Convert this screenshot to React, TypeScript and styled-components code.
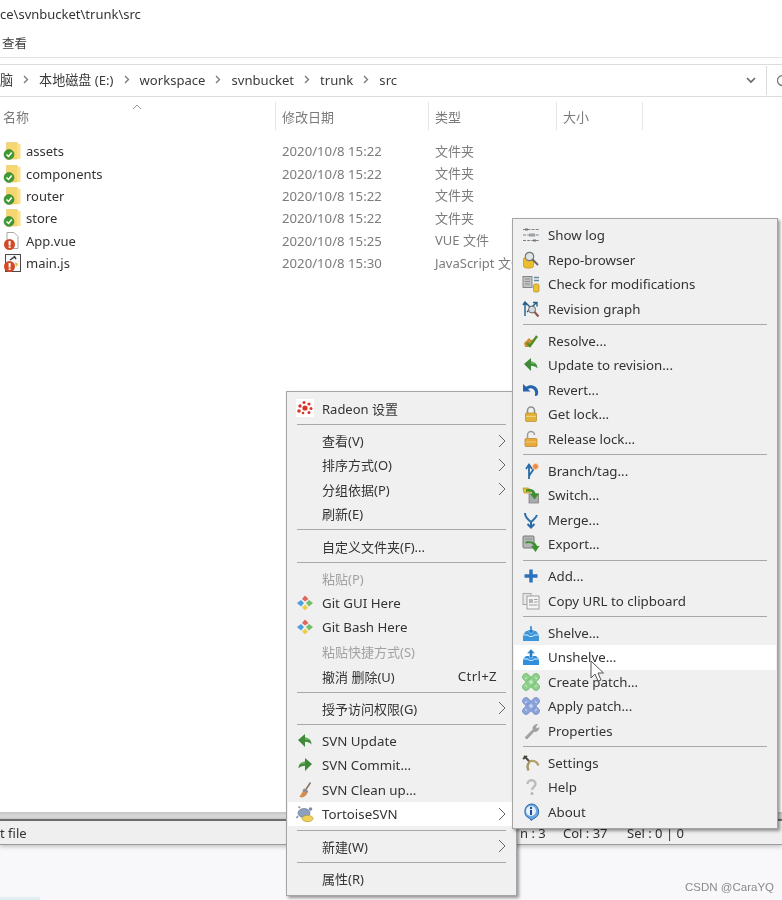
import React from "react";
import styled, { createGlobalStyle } from "styled-components";

const Global = createGlobalStyle`
  html, body { margin: 0; padding: 0; background: #fff; }
  body { font-family: "Noto Sans", "Noto Sans CJK SC", sans-serif; }
`;

const Page = styled.div`
  position: relative;
  width: 782px;
  height: 900px;
  overflow: hidden;
  display: flex;
  flex-direction: column;
  background: #fff;
  color: #333;
  font-size: 13px;
  filter: blur(0.4px);
`;
const TitleBar = styled.div`
  height: 28px;
  flex: none;
  display: flex;
  align-items: center;
  font-size: 13px;
  color: #333;
`;
const Toolbar = styled.div`
  height: 30px;
  flex: none;
  display: flex;
  align-items: center;
  padding-left: 2px;
  font-size: 12.5px;
  color: #444;
  border-bottom: 1px solid #e2e2e2;
  box-sizing: border-box;
`;
const AddressBar = styled.div`
  margin-top: 6px;
  height: 33px;
  flex: none;
  box-sizing: border-box;
  padding-bottom: 2px;
  border-top: 1px solid #dcdcdc;
  border-bottom: 1px solid #dcdcdc;
  display: flex;
  align-items: center;
  gap: 10px;
`;
const Crumb = styled.span`
  font-size: 13.1px;
  color: #3c3c3c;
  white-space: nowrap;
`;
const AddressEnd = styled.div`
  margin-left: auto;
  margin-bottom: -2px;
  height: 100%;
  width: 36px;
  flex: none;
  display: flex;
  align-items: center;
  gap: 10px;
  svg { flex: none; }
`;
const AddressDivider = styled.div`
  width: 1px;
  height: 100%;
  flex: none;
  background: #dcdcdc;
`;
const HeaderRow = styled.div`
  position: relative;
  margin-top: 4px;
  height: 29px;
  flex: none;
  display: grid;
  grid-template-columns: 276px 153px 128px 86px;
  align-items: stretch;
  font-size: 13px;
  color: #7a7a7a;
`;
const HeaderCell = styled.div<{ $first?: boolean }>`
  display: flex;
  align-items: center;
  padding-left: ${p => (p.$first ? 3 : 6)}px;
  padding-top: 1px;
  border-right: 1px solid #e6e6e6;
  margin-top: 1px;
  box-sizing: border-box;
`;
const SortCaret = styled.svg`
  position: absolute;
  left: 132px;
  top: 3px;
`;
const FileList = styled.div`
  flex: 1;
  padding-top: 10px;
  min-height: 0;
`;
const FileRow = styled.div`
  height: 22.4px;
  display: grid;
  grid-template-columns: 276px 153px auto;
  align-items: center;
`;
const NameCell = styled.div`
  display: flex;
  align-items: center;
  gap: 5px;
  padding-left: 3px;
  font-size: 13px;
  color: #333;
`;
const DateCell = styled.div`
  padding-left: 6px;
  font-size: 13.2px;
  color: #7c7c7c;
  white-space: nowrap;
`;
const TypeCell = styled(DateCell)`
  font-size: 13px;
  margin-bottom: 2px;
`;
const Splitter = styled.div`
  height: 9px;
  flex: none;
  box-sizing: border-box;
  background: linear-gradient(#c4c4c4, #dadada 60%, #c8c8c8);
  border-bottom: 2px solid #6f6f6f;
`;
const StatusBar = styled.div`
  height: 24px;
  flex: none;
  box-sizing: border-box;
  display: grid;
  grid-template-columns: 520px 43px 64px auto;
  align-items: center;
  background: #efefef;
  border-bottom: 1px solid #9a9a9a;
  box-shadow: 0 2px 4px rgba(0, 0, 0, 0.2);
  font-size: 13px;
  color: #333;
  white-space: nowrap;
  position: relative;
`;
const FooterArea = styled.div`
  height: 55px;
  flex: none;
  box-sizing: border-box;
  background: #f8f7f9;
  display: flex;
  align-items: flex-end;
  justify-content: flex-start;
  padding: 0 0 7px 685px;
`;
const Watermark = styled.span`
  font-family: "Liberation Sans", sans-serif;
  font-size: 11.5px;
  color: #8a8a8a;
  white-space: nowrap;
`;
const BottomTab = styled.div`
  position: absolute;
  left: 0;
  bottom: 0;
  width: 40px;
  height: 3px;
  background: #e2eef2;
`;
const Menu = styled.div<{ $left: number; $top: number; $w: number; $h: number; $row: number; $sep: number; $pad: number }>`
  position: absolute;
  left: ${p => p.$left}px;
  top: ${p => p.$top}px;
  width: ${p => p.$w}px;
  height: ${p => p.$h}px;
  box-sizing: border-box;
  padding: ${p => p.$pad}px 1px 0;
  background: #f0f0f0;
  border: 1px solid #a4a4a4;
  box-shadow: 2px 2px 3px rgba(0, 0, 0, 0.4);
  --row: ${p => p.$row}px;
  --sep: ${p => p.$sep}px;
  overflow: hidden;
`;
const Item = styled.div<{ $hot?: boolean; $off?: boolean }>`
  height: var(--row);
  display: flex;
  align-items: center;
  gap: 8px;
  padding: 0 9px 0 8px;
  white-space: nowrap;
  color: ${p => (p.$off ? "#a2a2a2" : "#333")};
  background: ${p => (p.$hot ? "#fff" : "transparent")};
`;
const Label = styled.span<{ $zh: boolean }>`
  font-size: ${p => (p.$zh ? 13 : 13.3)}px;
`;
const IconSlot = styled.span`
  width: 18px;
  height: 18px;
  flex: none;
  display: flex;
`;
const Shortcut = styled.span`
  margin-left: auto;
  margin-right: 9px;
  font-size: 13.3px;
  letter-spacing: 0.3px;
`;
const Chevron = styled.svg`
  margin-left: auto;
  flex: none;
`;
const Sep = styled.div`
  height: var(--sep);
  display: flex;
  align-items: center;
  padding: 0 9px;
  &::after {
    content: "";
    flex: 1;
    height: 1px;
    background: #a8a8a8;
  }
`;
const Cursor = styled.svg`
  position: absolute;
  left: 590px;
  top: 660px;
`;

const I = ({ children }: { children: React.ReactNode }) => (
  <svg width="18" height="18" viewBox="0 0 18 18">{children}</svg>
);

const Patch = ({ a, b, c }: { a: string; b: string; c: string }) => (
  <I>
    <g fill={a} stroke={b} strokeWidth=".5">
      <rect x="-1.500" y="5.500" width="21" height="7" rx="3" transform="rotate(45 9 9)" />
      <rect x="-1.500" y="5.500" width="21" height="7" rx="3" transform="rotate(-45 9 9)" />
    </g>
    <path d="M6.500 9L9 6.500 11.500 9 9 11.500z" fill={c} />
    <path d="M3 6l2-2M13 4l2 2M3 12l2 2M13 14l2-2" stroke={c} strokeWidth="1.200" />
  </I>
);

const icons: Record<string, React.ReactNode> = {
  log: <I><g stroke="#7d8288" strokeWidth="1.100"><path d="M1 3.500h16M1 9h16M1 14.500h16" strokeDasharray="3 1.200" /></g><path d="M7 7.500h6v3H7z" fill="#9aa0a6" /><path d="M3 2.500h3v2H3zM11 13.500h3v2h-3z" fill="#777" /></I>,
  repo: <I><path d="M1.500 7.500c0-1.300 10-1.300 10 0v8c0 2.200-10 2.200-10 0z" fill="#e9bd2c" stroke="#b98a14" strokeWidth=".6" /><circle cx="7.500" cy="5.500" r="4.200" fill="#dfe4e6" stroke="#75797c" strokeWidth="1.200" /><path d="M10.500 8.500l5.500 5.500" stroke="#6e6258" strokeWidth="2" /></I>,
  check: <I><rect x="1" y="1.500" width="9" height="11" fill="#c0c2c4" stroke="#85888b" /><path d="M3 4h5M3 6.500h5M3 9h5" stroke="#8d9094" /><path d="M12 2.500h5M12 5.500h5" stroke="#5e8c9e" strokeWidth="1.400" /><rect x="11.500" y="9" width="5.500" height="8" rx="1.500" fill="#ecc136" stroke="#b38a14" strokeWidth=".7" /></I>,
  graph: <I><path d="M3 16V3M1 5l2-3 2 3M5 12L14 3M11 2.500h4v4M4 3l8 8" stroke="#1f5f8e" strokeWidth="1.400" fill="none" /><circle cx="10" cy="9.500" r="3.500" fill="#d4dbe0" stroke="#666" /><path d="M12.500 12l4 4.500" stroke="#8a5a48" strokeWidth="2.200" /></I>,
  resolve: <I><path d="M2 11l5-5 2 2 3-1-1 4-3 4H3z" fill="#c99136" /><path d="M5 11l3 3 7-10" stroke="#4f8c2a" strokeWidth="2.400" fill="none" /></I>,
  update: <I><path d="M2 8l7-6v3.500c4 .5 6.500 3 6.500 7-1.500-2-3.500-2.800-6.500-2.800V15z" fill="#3f8a38" /><path d="M9 2v3.500c3 .4 5 1.500 6 3.500-2-1-4-1.200-6-1.200z" fill="#6fb060" /></I>,
  commit: <I><path d="M16 8L9 2v3.500c-4 .5-6.500 3-6.500 7 1.500-2 3.500-2.800 6.500-2.800V15z" fill="#3f8a38" /><path d="M9 2v3.500c-3 .4-5 1.500-6 3.500 2-1 4-1.200 6-1.200z" fill="#6fb060" /></I>,
  revert: <I><path d="M1 3v7.500h7.500L6 8c3-1.500 6-.5 7 3 .3 1.200.2 2.700-.3 4l2.800-.5c1.300-3 .8-6.500-1.700-8.500C10.500 3.500 7 3.700 4 5.700z" fill="#2663ac" /></I>,
  lock: <I><path d="M5.500 8V5.500a3.500 3.500 0 017 0V8" stroke="#8f8f8f" strokeWidth="1.600" fill="none" /><rect x="3.500" y="8" width="11" height="8.500" rx="1" fill="#e3b23a" stroke="#a97f15" strokeWidth=".6" /><path d="M4 11.500h10" stroke="#f0d27b" /></I>,
  unlock: <I><path d="M5.500 8V5a3.500 3.500 0 017 0" stroke="#9b9b9b" strokeWidth="1.500" fill="none" /><rect x="3" y="8.500" width="12" height="8" rx="1" fill="#e8a83a" stroke="#b5741a" strokeWidth=".6" /><path d="M3.500 12h11" stroke="#f3cd7c" /></I>,
  branch: <I><path d="M7 17V4M4 7l3-4.500L10 7M7 14L13 5" stroke="#2a6aa8" strokeWidth="1.800" fill="none" /><circle cx="13.500" cy="4.500" r="3" fill="#ef8a45" stroke="#fcd9b5" /></I>,
  switch: <I><rect x="7" y="8" width="9.500" height="9" fill="#a9acae" stroke="#777" strokeWidth=".7" /><path d="M1 2h5.500L8 3.500V7H2z" fill="#e8c338" stroke="#a98a14" strokeWidth=".7" /><path d="M4 3.500c5.500-1.500 9 .5 9.500 4H17l-4.500 6-4.500-6h2.500C10 6 7.500 5 4 6z" fill="#3f8f2f" /></I>,
  merge: <I><path d="M9 10V16M5.500 13L9 16.500l3.500-3.500" stroke="#2a6aa8" strokeWidth="2" fill="none" /><path d="M3 2c0 5 3 6 6 9 3-3 5-4 6-7" stroke="#2f6fa8" strokeWidth="2" fill="none" /></I>,
  export: <I><rect x="1" y="1" width="11" height="12" rx="1" fill="#b5b7b8" stroke="#77797b" /><path d="M3 4h7" stroke="#8b8d90" /><path d="M3.500 8.500c5-1.500 7 0 8 2.500H9l4.500 6 4-6H15C14 7 9 5.500 3.500 6.500z" fill="#3c9330" /></I>,
  add: <I><path d="M9 2.500v13M2.500 9h13" stroke="#2a70bd" strokeWidth="3.400" /></I>,
  copy: <I><rect x="1" y="1.500" width="8" height="11" fill="#e8e8e8" stroke="#a8a8a8" /><rect x="5" y="4" width="12" height="13" fill="#f5f5f5" stroke="#a0a0a0" /><path d="M7 7h4v4H7z" fill="#b5b5b5" /><path d="M12 7.500h3.500M12 10h3.500M7 13h8.500" stroke="#a0a0a0" /></I>,
  shelve: <I><path d="M1 11l3-4h10l3 4v6H1z" fill="#3d96dc" /><path d="M1 11h5c0 2 6 2 6 0h5" stroke="#d7edfb" fill="none" /><path d="M9 10L5.500 6H8V2h2v4h2.500z" fill="#2a7cc4" stroke="#d7edfb" strokeWidth=".5" /></I>,
  unshelve: <I><path d="M1 11l3-3h10l3 3v6H1z" fill="#2f8ede" /><path d="M1 11h5c0 2 6 2 6 0h5" stroke="#d7edfb" fill="none" /><path d="M9 1l4 4.500h-2.500V10h-3V5.500H5z" fill="#2a7cc4" stroke="#d7edfb" strokeWidth=".5" /></I>,
  patchG: <Patch a="#8ccf8a" b="#63ad63" c="#bfe8b8" />,
  patchB: <Patch a="#8aa2da" b="#6a84c2" c="#c0cfee" />,
  wrench: <I><path d="M3 15.500l8-8c-.5-2.500 1-5 4.500-5l-2 2.500 1.500 2 2-1.500c0 3-2.500 4.500-5 4l-7 7.500z" fill="#a3a3a3" stroke="#858585" strokeWidth=".5" /></I>,
  settings: <I><path d="M2 2l6 6M1 5l4-3" stroke="#4a463f" strokeWidth="2" /><path d="M7 7.500c4-1.500 8 0 9.500 4" stroke="#b3a06a" strokeWidth="2.400" fill="none" /><path d="M7.500 8c-2 2-2.500 5-1 8.500" stroke="#a8965f" strokeWidth="2.400" fill="none" /></I>,
  help: <I><path d="M5.500 6c0-5 8-5 8 0 0 3-3.500 3-3.500 6" stroke="#bdbdbd" strokeWidth="2.400" fill="none" /><circle cx="10" cy="15.500" r="1.500" fill="#b5b5b5" /></I>,
  about: <I><path d="M9 1a7.500 7.500 0 013 14.400L9 17.500l-1-2A7.500 7.500 0 019 1z" fill="#6aa7e0" stroke="#2d68aa" /><circle cx="9" cy="8" r="5" fill="#e6f1fb" /><rect x="8" y="7" width="2" height="5" fill="#1f4f9a" /><circle cx="9" cy="5" r="1.200" fill="#1f4f9a" /></I>,
  radeon: <I><rect width="18" height="18" fill="#fff" /><g fill="#d8342a"><circle cx="9" cy="9" r="2.600" /><circle cx="4" cy="7" r="1.700" /><circle cx="3" cy="12" r="1.800" /><circle cx="8" cy="3.500" r="1.500" /><circle cx="13" cy="5" r="1.600" /><circle cx="15" cy="9.500" r="1.500" /><circle cx="13" cy="13.500" r="1.500" /><circle cx="7" cy="14" r="1.300" /></g></I>,
  git: <I><path d="M9 1.500L12.500 5 9 7.500 6 5z" fill="#e2665c" /><path d="M5 6l3 3-3 3.500L1 9z" fill="#4f9fdc" /><path d="M13 6l4 3-4 3.500L10 9z" fill="#72bf6a" /><path d="M9 10.500l3 3L9 16.500 6 13.500z" fill="#eecb4c" /></I>,
  cleanup: <I><path d="M14.500 1.500L9.500 9" stroke="#8a6b54" strokeWidth="1.400" /><path d="M8 7.500l4 2.500c-.5 3-2.500 6-6.500 6.500-1 0-1.800-.5-2-1.200C5 14 6.500 11 8 7.500z" fill="#d58d50" /><path d="M8 7.500l4 2.500-1 2-4.500-2z" fill="#8e8e96" /></I>,
  tortoise: <I><ellipse cx="8" cy="8" rx="6" ry="4.500" fill="#8ca0bd" stroke="#5f7088" strokeWidth=".6" /><circle cx="14.500" cy="4" r="1.800" fill="#7d8ea8" /><path d="M2 11l-1.500 2M4 3L2.500 1.500" stroke="#7d8ea8" strokeWidth="1.500" /><ellipse cx="11.500" cy="13.500" rx="5.500" ry="3.200" fill="#efd256" stroke="#a98f28" strokeWidth=".6" /></I>,
  folderCheck: <I><path d="M3.500 .5h10a1 1 0 011 1V17h-11z" fill="#f6d670" stroke="#e2bf55" strokeWidth=".5" /><path d="M14 2h3.500v15H14z" fill="#f9e18a" /><circle cx="6" cy="12.500" r="5" fill="#3f9a32" stroke="#2f7526" strokeWidth=".5" /><path d="M3.500 12.500l2 2 3.200-4" stroke="#fff" strokeWidth="1.500" fill="none" /></I>,
  vue: <I><path d="M4 .5h7l4 4v12H4z" fill="#fff" stroke="#a8a8a8" /><circle cx="6.500" cy="12.500" r="5.500" fill="#d24a25" /><rect x="5.600" y="9" width="2" height="4.500" fill="#fff" /><rect x="5.600" y="14.300" width="2" height="1.600" fill="#fff" /></I>,
  js: <I><rect x="2.500" y=".5" width="15" height="17" fill="#f7f7f7" stroke="#4a4a4a" /><path d="M7 6l5-3.500M11 2l2 3" stroke="#3a3a3a" strokeWidth="1.500" /><path d="M12 8l3 2-2 3z" fill="#e2b23c" /><circle cx="6.500" cy="12.500" r="5.500" fill="#d24a25" /><rect x="5.600" y="9" width="2" height="4.500" fill="#fff" /><rect x="5.600" y="14.300" width="2" height="1.600" fill="#fff" /></I>,
};

const files = [
  ["folderCheck", "assets", "2020/10/8 15:22", "文件夹"],
  ["folderCheck", "components", "2020/10/8 15:22", "文件夹"],
  ["folderCheck", "router", "2020/10/8 15:22", "文件夹"],
  ["folderCheck", "store", "2020/10/8 15:22", "文件夹"],
  ["vue", "App.vue", "2020/10/8 15:25", "VUE 文件"],
  ["js", "main.js", "2020/10/8 15:30", "JavaScript 文件"],
];

type Entry = { t: string; i?: string; sub?: boolean; key?: string; off?: boolean; hot?: boolean } | null;

const contextMenu: Entry[] = [
  { t: "Radeon 设置", i: "radeon" }, null,
  { t: "查看(V)", sub: true }, { t: "排序方式(O)", sub: true }, { t: "分组依据(P)", sub: true }, { t: "刷新(E)" }, null,
  { t: "自定义文件夹(F)..." }, null,
  { t: "粘贴(P)", off: true }, { t: "Git GUI Here", i: "git" }, { t: "Git Bash Here", i: "git" },
  { t: "粘贴快捷方式(S)", off: true }, { t: "撤消 删除(U)", key: "Ctrl+Z" }, null,
  { t: "授予访问权限(G)", sub: true }, null,
  { t: "SVN Update", i: "update" }, { t: "SVN Commit...", i: "commit" }, { t: "SVN Clean up...", i: "cleanup" },
  { t: "TortoiseSVN", i: "tortoise", sub: true, hot: true }, null,
  { t: "新建(W)", sub: true }, null,
  { t: "属性(R)" },
];

const svnMenu: Entry[] = [
  { t: "Show log", i: "log" }, { t: "Repo-browser", i: "repo" }, { t: "Check for modifications", i: "check" }, { t: "Revision graph", i: "graph" }, null,
  { t: "Resolve...", i: "resolve" }, { t: "Update to revision...", i: "update" }, { t: "Revert...", i: "revert" }, { t: "Get lock...", i: "lock" }, { t: "Release lock...", i: "unlock" }, null,
  { t: "Branch/tag...", i: "branch" }, { t: "Switch...", i: "switch" }, { t: "Merge...", i: "merge" }, { t: "Export...", i: "export" }, null,
  { t: "Add...", i: "add" }, { t: "Copy URL to clipboard", i: "copy" }, null,
  { t: "Shelve...", i: "shelve" }, { t: "Unshelve...", i: "unshelve", hot: true }, { t: "Create patch...", i: "patchG" }, { t: "Apply patch...", i: "patchB" }, { t: "Properties", i: "wrench" }, null,
  { t: "Settings", i: "settings" }, { t: "Help", i: "help" }, { t: "About", i: "about" },
];

const hasHan = (s: string) => /[\u4e00-\u9fff]/.test(s);

const MenuItems = ({ items }: { items: Entry[] }) => (
  <>
    {items.map((e, n) =>
      e === null ? (
        <Sep key={n} />
      ) : (
        <Item key={n} $hot={e.hot} $off={e.off}>
          <IconSlot>{e.i ? icons[e.i] : null}</IconSlot>
          <Label $zh={hasHan(e.t)}>{e.t}</Label>
          {e.key ? <Shortcut>{e.key}</Shortcut> : null}
          {e.sub ? (
            <Chevron width="8" height="14" viewBox="0 0 8 14">
              <path d="M1 1l6 6-6 6" stroke="#666" strokeWidth="1" fill="none" />
            </Chevron>
          ) : null}
        </Item>
      )
    )}
  </>
);

const CrumbArrow = () => (
  <svg width="6" height="9" viewBox="0 0 6 9" style={{ flex: "none" }}>
    <path d="M1 1l3.500 3.500L1 8" stroke="#777" strokeWidth="1.300" fill="none" />
  </svg>
);

const crumbs = ["脑", "本地磁盘 (E:)", "workspace", "svnbucket", "trunk", "src"];

export default function App() {
  return (
    <Page>
      <Global />
      <TitleBar>ce\svnbucket\trunk\src</TitleBar>
      <Toolbar>查看</Toolbar>
      <AddressBar>
        {crumbs.map((c, n) => (
          <React.Fragment key={c}>
            {n > 0 ? <CrumbArrow /> : null}
            <Crumb>{c}</Crumb>
          </React.Fragment>
        ))}
        <AddressEnd>
          <svg width="10" height="7" viewBox="0 0 10 7">
            <path d="M1 1l4 4 4-4" stroke="#666" strokeWidth="1.600" fill="none" />
          </svg>
          <AddressDivider />
          <svg width="12" height="14" viewBox="0 0 12 14">
            <path d="M9 3a5 5 0 10.800 6M7 1l2 2-2 2" stroke="#777" strokeWidth="1.300" fill="none" />
          </svg>
        </AddressEnd>
      </AddressBar>
      <HeaderRow>
        <SortCaret width="10" height="6" viewBox="0 0 10 6">
          <path d="M1 5l4-4 4 4" stroke="#999" fill="none" />
        </SortCaret>
        <HeaderCell $first>名称</HeaderCell>
        <HeaderCell>修改日期</HeaderCell>
        <HeaderCell>类型</HeaderCell>
        <HeaderCell>大小</HeaderCell>
      </HeaderRow>
      <FileList>
        {files.map(f => (
          <FileRow key={f[1]}>
            <NameCell>
              <IconSlot>{icons[f[0]]}</IconSlot>
              {f[1]}
            </NameCell>
            <DateCell>{f[2]}</DateCell>
            <TypeCell>{f[3]}</TypeCell>
          </FileRow>
        ))}
      </FileList>
      <Splitter />
      <StatusBar>
        <span>t file</span>
        <span>n : 3</span>
        <span>Col : 37</span>
        <span>Sel : 0 | 0</span>
      </StatusBar>
      <FooterArea>
        <Watermark>CSDN @CaraYQ</Watermark>
      </FooterArea>
      <BottomTab />
      <Menu $left={286} $top={391} $w={231} $h={505} $row={24.4} $sep={8} $pad={4}>
        <MenuItems items={contextMenu} />
      </Menu>
      <Menu $left={512} $top={218} $w={266} $h={611} $row={24.5} $sep={7.5} $pad={4}>
        <MenuItems items={svnMenu} />
      </Menu>
      <Cursor width="15" height="23" viewBox="0 0 15 23">
        <path d="M1 1v17l4-4 3 7 3-1-3-7h5.500z" fill="#fff" stroke="#555" strokeWidth="1" />
      </Cursor>
    </Page>
  );
}
